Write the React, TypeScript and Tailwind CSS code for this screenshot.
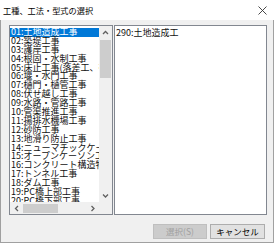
import React from "react";

const items = [
  "01:土地造成工事",
  "02:築堤工事",
  "03:護岸工事",
  "04:根固・水制工事",
  "05:床止工事(落差工、帯工)",
  "06:堰・水門工事",
  "07:樋門・樋管工事",
  "08:伏せ越し工事",
  "09:水路・管路工事",
  "10:管渠推進工事",
  "11:揚排水機場工事",
  "12:砂防工事",
  "13:地滑り防止工事",
  "14:ニューマチックケーソン工事",
  "15:オープンケーソン工事",
  "16:コンクリート構造物工事",
  "17:トンネル工事",
  "18:ダム工事",
  "19:PC橋上部工事",
  "20:PC橋下部工事",
  "21:鋼橋上部工事",
];

const font = { fontFamily: '"Noto Sans CJK JP", "Noto Sans", sans-serif' };

function Chevron({ dir }: { dir: "up" | "down" | "left" | "right" }) {
  const d =
    dir === "up"
      ? "M1 4 L3.5 1.5 L6 4"
      : dir === "down"
      ? "M1 1.5 L3.5 4 L6 1.5"
      : dir === "left"
      ? "M4 1 L1.5 3.5 L4 6"
      : "M1.5 1 L4 3.5 L1.5 6";
  const w = dir === "up" || dir === "down" ? 7 : 5.5;
  const h = dir === "up" || dir === "down" ? 5.5 : 7;
  return (
    <svg width={w} height={h} viewBox={`0 0 ${w} ${h}`}>
      <path d={d} fill="none" stroke="#606060" strokeWidth="1.3" />
    </svg>
  );
}

export default function App() {
  return (
    <div className="w-[275px] h-[243px] bg-white flex flex-col overflow-hidden" style={font}>
      <div className="h-[20px] flex items-center justify-between pl-[3px] pr-[8px] bg-white">
        <span className="text-[8.2px] text-black leading-none">工種、工法・型式の選択</span>
        <svg width="9" height="9" viewBox="0 0 9 9">
          <path d="M0.5 0.5 L8.5 8.5 M8.5 0.5 L0.5 8.5" stroke="#333" strokeWidth="0.9" />
        </svg>
      </div>
      <div className="flex-1 bg-[#f0f0f0] border-l border-r border-b border-[#a0a0a0] w-[274px] flex flex-col">
        <div className="flex pl-[8px] pt-[5px] gap-[1px]">
          <div className="w-[104px] h-[190px] border border-[#828790] bg-white grid grid-cols-[89px_13px] grid-rows-[176px_12px]">
            <div className="overflow-hidden pt-[2px]">
              {items.map((t, i) => (
                <div
                  key={t}
                  className={`h-[8.9px] leading-[8.9px] text-[9px] whitespace-nowrap pl-[1px] ${
                    i === 0 ? "bg-[#0078d7] text-white" : "text-[#111]"
                  }`}
                >
                  {t}
                </div>
              ))}
            </div>
            <div className="bg-[#f0f0f0] flex flex-col">
              <div className="h-[14px] flex items-center justify-center">
                <Chevron dir="up" />
              </div>
              <div className="h-[38px] mx-[1px] bg-[#cdcdcd]" />
              <div className="flex-1" />
              <div className="h-[13px] flex items-center justify-center">
                <Chevron dir="down" />
              </div>
            </div>
            <div className="bg-[#f0f0f0] flex items-center">
              <div className="w-[13px] flex justify-center">
                <Chevron dir="left" />
              </div>
              <div className="w-[35px] h-[9px] bg-[#cdcdcd]" />
              <div className="flex-1" />
              <div className="w-[13px] flex justify-center">
                <Chevron dir="right" />
              </div>
            </div>
            <div className="bg-[#f0f0f0]" />
          </div>
          <div className="w-[153px] h-[190px] border border-[#828790] bg-white px-[1px] pt-[2px]">
            <div className="text-[9px] leading-[9px] text-[#111] whitespace-nowrap">290:土地造成工</div>
          </div>
        </div>
        <div className="flex justify-end gap-[3px] pr-[8px] mt-[9px]">
          <div className="w-[54px] h-[15px] bg-[#cccccc] border border-[#bfbfbf] flex items-center justify-center text-[8.5px] text-[#a0a0a0]">
            選択(S)
          </div>
          <div className="w-[55px] h-[15px] bg-[#e1e1e1] border border-[#adadad] flex items-center justify-center text-[8.5px] text-black">
            キャンセル
          </div>
        </div>
      </div>
    </div>
  );
}
